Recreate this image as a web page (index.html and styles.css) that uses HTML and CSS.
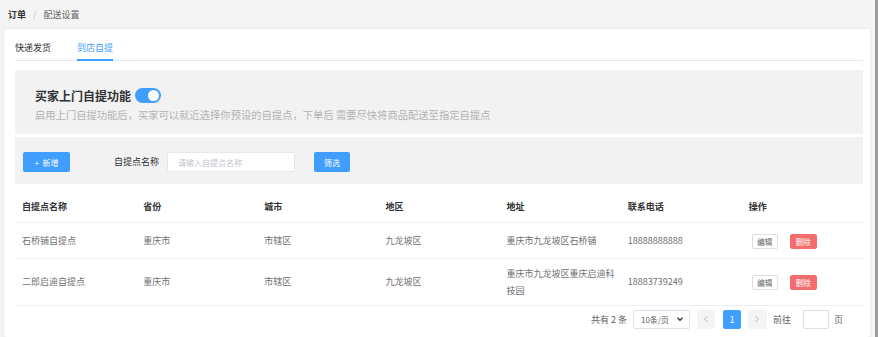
FILE: index.html
```html
<!DOCTYPE html>
<html lang="zh-CN">
<head>
  <meta charset="UTF-8">
  <meta name="viewport" content="width=device-width, initial-scale=1.0">
  <title>配送设置</title>
  <link rel="stylesheet" href="styles.css">
</head>
<body>
  <div class="page">
    <div class="breadcrumb">
      <span class="crumb-main">订单</span>
      <span class="crumb-sep">/</span>
      <span class="crumb-sub">配送设置</span>
    </div>

    <div class="card">
      <div class="tabs">
        <div class="tab">快递发货</div>
        <div class="tab active">到店自提</div>
      </div>

      <!-- 自提开关 -->
      <div class="switch-panel">
        <div class="switch-row">
          <span class="switch-title">买家上门自提功能</span>
          <span class="toggle"><span class="knob"></span></span>
        </div>
        <p class="switch-desc">启用上门自提功能后，买家可以就近选择你预设的自提点，下单后 需要尽快将商品配送至指定自提点</p>
      </div>

      <!-- 筛选 -->
      <div class="filter-panel">
        <button class="btn btn-primary btn-add">+&nbsp;&nbsp;新增</button>
        <span class="filter-label">自提点名称</span>
        <input type="text" class="filter-input" placeholder="请输入自提点名称">
        <button class="btn btn-primary btn-search">筛选</button>
      </div>

      <table class="list">
        <thead>
          <tr>
            <th>自提点名称</th>
            <th>省份</th>
            <th>城市</th>
            <th>地区</th>
            <th>地址</th>
            <th>联系电话</th>
            <th>操作</th>
          </tr>
        </thead>
        <tbody>
          <tr>
            <td>石桥铺自提点</td>
            <td>重庆市</td>
            <td>市辖区</td>
            <td>九龙坡区</td>
            <td>重庆市九龙坡区石桥铺</td>
            <td>18888888888</td>
            <td><button class="btn btn-mini">编辑</button><button class="btn btn-mini btn-danger">删除</button></td>
          </tr>
          <tr>
            <td>二郎启迪自提点</td>
            <td>重庆市</td>
            <td>市辖区</td>
            <td>九龙坡区</td>
            <td>重庆市九龙坡区重庆启迪科技园</td>
            <td>18883739249</td>
            <td><button class="btn btn-mini">编辑</button><button class="btn btn-mini btn-danger">删除</button></td>
          </tr>
        </tbody>
      </table>

      <div class="pager">
        <span class="pager-total">共有 2 条</span>
        <div class="pager-size">
          <span>10条/页</span>
          <svg width="8" height="8" viewBox="0 0 8 8"><path d="M1.5 2.8 L4 5.3 L6.5 2.8" fill="none" stroke="#333" stroke-width="1.3"/></svg>
        </div>
        <span class="pager-btn">
          <svg width="6" height="8" viewBox="0 0 6 8"><path d="M4.5 1 L1.5 4 L4.5 7" fill="none" stroke="#b0b3b8" stroke-width="0.9"/></svg>
        </span>
        <span class="pager-num current">1</span>
        <span class="pager-btn">
          <svg width="6" height="8" viewBox="0 0 6 8"><path d="M1.5 1 L4.5 4 L1.5 7" fill="none" stroke="#b0b3b8" stroke-width="0.9"/></svg>
        </span>
        <span class="pager-goto">前往</span>
        <input type="text" class="pager-input">
        <span class="pager-unit">页</span>
      </div>
    </div>
  </div>
</body>
</html>
```

FILE: styles.css
```css
* {
  box-sizing: border-box;
}

body {
  margin: 0;
  background-color: #f4f4f4;
  font-family: "Noto Sans CJK SC", "Noto Sans", sans-serif;
  color: #666;
}

.page {
  width: 878px;
  height: 337px;
  display: flex;
  flex-direction: column;
  border-right: 3px solid #9c9c9c;
  overflow: hidden;
}

.breadcrumb {
  height: 29px;
  padding: 9px 0 0 8px;
  font-size: 9px;
  line-height: 12px;
  display: flex;
}

.crumb-main {
  color: #303133;
  font-weight: bold;
}

.crumb-sep {
  color: #c0c4cc;
  margin: 0 7px;
}

.crumb-sub {
  color: #666;
}

.card {
  flex: 1;
  margin: 0 5px 0 4px;
  padding: 0 7px 0 11px;
  background-color: #fff;
  border-radius: 3px;
  box-shadow: 0 0 3px rgba(0, 0, 0, 0.08);
}

/* tabs */
.tabs {
  display: flex;
  gap: 26px;
  height: 32px;
  border-bottom: 1px solid #e4e7ed;
}

.tab {
  padding-top: 12px;
  font-size: 9px;
  line-height: 14px;
  color: #303133;
  height: 32px;
}

.tab.active {
  color: #409eff;
  border-bottom: 2px solid #409eff;
}

/* switch */
.switch-panel {
  margin-top: 9px;
  height: 64px;
  padding: 18px 0 0 20px;
  background-color: #f2f2f2;
}

.switch-row {
  display: flex;
  align-items: center;
  height: 14px;
}

.switch-title {
  font-size: 12px;
  font-weight: bold;
  color: #303133;
  margin-right: 4px;
}

.toggle {
  width: 26px;
  height: 15px;
  border-radius: 8px;
  background-color: #409eff;
  position: relative;
}

.knob {
  position: absolute;
  right: 2px;
  top: 2px;
  width: 11px;
  height: 11px;
  border-radius: 50%;
  background-color: #fff;
}

.switch-desc {
  margin: 6px 0 0;
  font-size: 10.3px;
  line-height: 14px;
  color: #b3b3b3;
}

/* filter */
.filter-panel {
  margin-top: 3px;
  height: 47px;
  padding: 15px 0 0 8px;
  background-color: #f2f2f2;
  display: flex;
  align-items: flex-start;
}

.btn {
  border: none;
  font-family: inherit;
  cursor: pointer;
  border-radius: 2px;
  padding: 0;
}

.btn-primary {
  background-color: #409eff;
  color: #fff;
  font-size: 8px;
  height: 20px;
}

.btn-add {
  width: 47px;
}

.filter-label {
  margin-left: 44px;
  font-size: 9px;
  line-height: 20px;
  color: #303133;
}

.filter-input {
  margin-left: 8px;
  width: 128px;
  height: 20px;
  border: 1px solid #e4e7ed;
  border-radius: 2px;
  padding: 0 10px;
  font-size: 8px;
  font-family: inherit;
  background-color: #fff;
  outline: none;
}

.filter-input::placeholder {
  color: #c0c4cc;
}

.btn-search {
  margin-left: 19px;
  width: 36px;
}

/* table */
.list {
  margin-top: 8px;
  width: 100%;
  border-collapse: collapse;
  table-layout: fixed;
  font-size: 9px;
}

.list th,
.list td {
  text-align: left;
  padding: 6px 4px 6px 7px;
  line-height: 17px;
  border-bottom: 1px solid #ebeef5;
  vertical-align: middle;
}

.list th {
  height: 30px;
  color: #303133;
  font-weight: bold;
}

.list td {
  height: 36px;
  color: #707070;
}

.btn-mini {
  height: 15px;
  width: 26px;
  font-size: 7.5px;
  line-height: 13px;
  background-color: #fff;
  color: #606266;
  border: 1px solid #dcdfe6;
  vertical-align: middle;
}

.btn-mini:first-child {
  margin-left: 3px;
}

.btn-mini + .btn-mini {
  margin-left: 12px;
}

.btn-danger {
  width: 27px;
  background-color: #f56c6c;
  border-color: #f56c6c;
  color: #fff;
}

/* pagination */
.pager {
  margin-top: 4px;
  padding-right: 20px;
  display: flex;
  justify-content: flex-end;
  align-items: center;
  height: 19px;
  font-size: 9px;
  color: #606266;
}

.pager-size {
  margin-left: 6px;
  width: 57px;
  height: 19px;
  border: 1px solid #dcdfe6;
  border-radius: 2px;
  padding: 0 5px 0 7px;
  display: flex;
  align-items: center;
  justify-content: space-between;
  font-size: 8px;
}

.pager-btn,
.pager-num {
  height: 19px;
  width: 18px;
  display: flex;
  align-items: center;
  justify-content: center;
  background-color: #f4f4f5;
  border-radius: 2px;
}

.pager-btn {
  margin-left: 7px;
}

.pager-num {
  margin-left: 8px;
}

.pager-num + .pager-btn {
  margin-left: 7px;
  width: 19px;
}

.pager-num.current {
  background-color: #409eff;
  color: #fff;
}

.pager-goto {
  margin-left: 6px;
}

.pager-input {
  margin-left: 12px;
  width: 26px;
  height: 19px;
  border: 1px solid #dcdfe6;
  border-radius: 2px;
  outline: none;
}

.pager-unit {
  margin-left: 5px;
}
```
